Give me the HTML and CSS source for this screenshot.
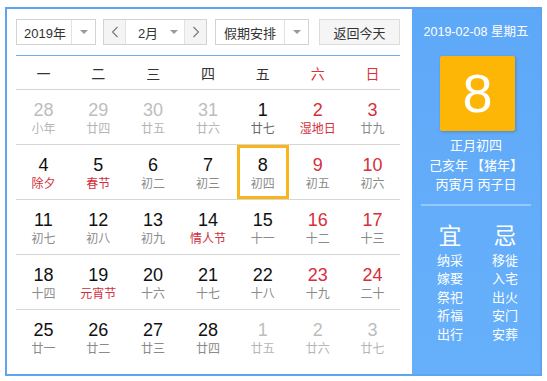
FILE: index.html
```html
<!DOCTYPE html>
<html lang="zh-CN">
<head>
<meta charset="utf-8">
<title>万年历</title>
<link rel="stylesheet" href="styles.css">
</head>
<body>
<div class="cal">
  <div class="main">
    <div class="toolbar">
      <div class="sel sel-year"><span class="val">2019年</span><span class="drop"><i class="tri"></i></span></div>
      <div class="sel sel-month">
        <span class="nav"><svg width="8" height="12" viewBox="0 0 8 12"><polyline points="6.5,1 1.5,6 6.5,11" fill="none" stroke="#777" stroke-width="1.1"/></svg></span>
        <span class="val">2月</span><span class="drop drop-in"><i class="tri"></i></span>
        <span class="nav nav-r"><svg width="8" height="12" viewBox="0 0 8 12"><polyline points="1.5,1 6.5,6 1.5,11" fill="none" stroke="#777" stroke-width="1.1"/></svg></span>
      </div>
      <div class="sel sel-hol"><span class="val">假期安排</span><span class="drop"><i class="tri"></i></span></div>
      <div class="today">返回今天</div>
    </div>
    <div class="weekdays">
      <span>一</span><span>二</span><span>三</span><span>四</span><span>五</span><span class="red">六</span><span class="red">日</span>
    </div>
    <div class="weeks">
      <div class="week">
        <div class="day other"><b>28</b><em>小年</em></div>
        <div class="day other"><b>29</b><em>廿四</em></div>
        <div class="day other"><b>30</b><em>廿五</em></div>
        <div class="day other"><b>31</b><em>廿六</em></div>
        <div class="day"><b>1</b><em class="dark">廿七</em></div>
        <div class="day wkend"><b>2</b><em class="fest">湿地日</em></div>
        <div class="day wkend"><b>3</b><em>廿九</em></div>
      </div>
      <div class="week">
        <div class="day"><b>4</b><em class="fest">除夕</em></div>
        <div class="day"><b>5</b><em class="fest">春节</em></div>
        <div class="day"><b>6</b><em>初二</em></div>
        <div class="day"><b>7</b><em>初三</em></div>
        <div class="day sel-day"><b>8</b><em>初四</em></div>
        <div class="day wkend"><b>9</b><em>初五</em></div>
        <div class="day wkend"><b>10</b><em>初六</em></div>
      </div>
      <div class="week">
        <div class="day"><b>11</b><em>初七</em></div>
        <div class="day"><b>12</b><em>初八</em></div>
        <div class="day"><b>13</b><em>初九</em></div>
        <div class="day"><b>14</b><em class="fest">情人节</em></div>
        <div class="day"><b>15</b><em>十一</em></div>
        <div class="day wkend"><b>16</b><em>十二</em></div>
        <div class="day wkend"><b>17</b><em>十三</em></div>
      </div>
      <div class="week">
        <div class="day"><b>18</b><em>十四</em></div>
        <div class="day"><b>19</b><em class="fest">元宵节</em></div>
        <div class="day"><b>20</b><em>十六</em></div>
        <div class="day"><b>21</b><em>十七</em></div>
        <div class="day"><b>22</b><em>十八</em></div>
        <div class="day wkend"><b>23</b><em>十九</em></div>
        <div class="day wkend"><b>24</b><em>二十</em></div>
      </div>
      <div class="week last">
        <div class="day"><b>25</b><em>廿一</em></div>
        <div class="day"><b>26</b><em>廿二</em></div>
        <div class="day"><b>27</b><em>廿三</em></div>
        <div class="day"><b>28</b><em>廿四</em></div>
        <div class="day other"><b>1</b><em>廿五</em></div>
        <div class="day other"><b>2</b><em>廿六</em></div>
        <div class="day other"><b>3</b><em>廿七</em></div>
      </div>
    </div>
  </div>
  <div class="side">
    <div class="side-date">2019-02-08 星期五</div>
    <div class="big-day">8</div>
    <div class="lunar-info">
      <div>正月初四</div>
      <div>己亥年 【猪年】</div>
      <div>丙寅月 丙子日</div>
    </div>
    <div class="divider"></div>
    <div class="yiji">
      <div class="col">
        <div class="head">宜</div>
        <div>纳采</div><div>嫁娶</div><div>祭祀</div><div>祈福</div><div>出行</div>
      </div>
      <div class="col">
        <div class="head">忌</div>
        <div>移徙</div><div>入宅</div><div>出火</div><div>安门</div><div>安葬</div>
      </div>
    </div>
  </div>
</div>
</body>
</html>
```

FILE: styles.css
```css
html, body {
  margin: 0;
  padding: 0;
  background: #fff;
}
body {
  font-family: "Liberation Sans", "Noto Sans CJK SC", sans-serif;
  color: #333;
}
.cal {
  margin: 7px 0 0 5px;
  width: 533px;
  height: 365px;
  border: 2px solid #5ea4ee;
  display: flex;
}
.main {
  width: 384px;
  padding: 10px 12px 0 9px;
}
.toolbar {
  display: flex;
  height: 26px;
  font-size: 13px;
}
.sel {
  box-sizing: border-box;
  height: 26px;
  border: 1px solid #d3d3d3;
  display: flex;
  align-items: stretch;
  background: #fff;
}
.sel .val {
  flex: 1;
  display: flex;
  align-items: center;
  justify-content: center;
  color: #333;
}
.drop {
  width: 23px;
  border-left: 1px solid #e2e2e2;
  display: flex;
  align-items: center;
  justify-content: center;
}
.drop-in {
  border-left: none;
  width: 20px;
}
.tri {
  width: 0;
  height: 0;
  border-left: 4px solid transparent;
  border-right: 4px solid transparent;
  border-top: 4px solid #9a9a9a;
}
.sel-year {
  width: 80px;
  margin-right: 7px;
}
.sel-year .val { padding-left: 2px; }
.sel-month {
  width: 104px;
  margin-right: 8px;
}
.sel-month .val { padding-left: 6px; }
.nav {
  width: 21px;
  background: #f4f4f4;
  border-right: 1px solid #e2e2e2;
  display: flex;
  align-items: center;
  justify-content: center;
}
.nav-r {
  border-right: none;
  border-left: 1px solid #e2e2e2;
}
.sel-hol {
  width: 94px;
  margin-right: 10px;
}
.today {
  box-sizing: border-box;
  width: 81px;
  height: 26px;
  border: 1px solid #dcdcdc;
  background: #f5f5f5;
  display: flex;
  align-items: center;
  justify-content: center;
  color: #333;
}
.weekdays {
  margin-top: 10px;
  border-top: 1px solid #6eaeea;
  border-bottom: 1px solid #d6d6d6;
  height: 33px;
  display: grid;
  grid-template-columns: repeat(7, 1fr);
  align-items: center;
  font-size: 14px;
  color: #333;
}
.weekdays span {
  text-align: center;
  font-family: "Noto Sans CJK SC", sans-serif;
}
.weekdays .red { color: #e0303a; }
.week {
  display: grid;
  grid-template-columns: repeat(7, 1fr);
  height: 54px;
  border-bottom: 1px solid #d6d6d6;
}
.week.last { border-bottom: none; }
.day {
  box-sizing: border-box;
  width: 52px;
  height: 54px;
  margin: 0 auto;
  border: 3px solid transparent;
  display: flex;
  flex-direction: column;
  align-items: center;
  padding-top: 7px;
}
.day b {
  font-weight: normal;
  font-size: 18px;
  line-height: 20px;
  color: #111;
}
.day em {
  font-style: normal;
  font-size: 12px;
  line-height: 16px;
  color: #8a8a8a;
  font-family: "Noto Sans CJK SC", sans-serif;
}
.day em.dark { color: #6a6a6a; }
.day.wkend b { color: #d82e3c; }
.day em.fest { color: #d22e3a; }
.day.other b { color: #bdbdbd; }
.day.other em { color: #b5b5b5; }
.day.sel-day { border-color: #f8b51c; }
.side {
  width: 128px;
  background: linear-gradient(#5ea8f8, #66b0fb);
  color: #fff;
  display: flex;
  flex-direction: column;
  align-items: center;
  font-family: "Noto Sans CJK SC", sans-serif;
}
.side-date {
  margin-top: 14px;
  font-size: 12.5px;
  line-height: 18px;
  font-family: "Liberation Sans", "Noto Sans CJK SC", sans-serif;
}
.big-day {
  margin-top: 15px;
  margin-left: 3px;
  width: 75px;
  height: 75px;
  background: #fdb606;
  box-shadow: 1px 1px 3px rgba(0, 0, 0, 0.2);
  border-radius: 2px;
  font-family: "Liberation Sans", sans-serif;
  font-size: 54px;
  line-height: 75px;
  text-align: center;
  color: #fff;
}
.lunar-info {
  margin-top: 4px;
  font-size: 13px;
  line-height: 19.5px;
  text-align: center;
}
.divider {
  margin-top: 10px;
  width: 110px;
  height: 2px;
  background: rgba(255, 255, 255, 0.35);
}
.yiji {
  display: flex;
  margin-top: 13px;
  margin-left: 3px;
}
.col {
  width: 55px;
  text-align: center;
  font-size: 13px;
  line-height: 18.5px;
}
.col .head {
  font-size: 23px;
  line-height: 30px;
  margin-bottom: 2px;
}
```
